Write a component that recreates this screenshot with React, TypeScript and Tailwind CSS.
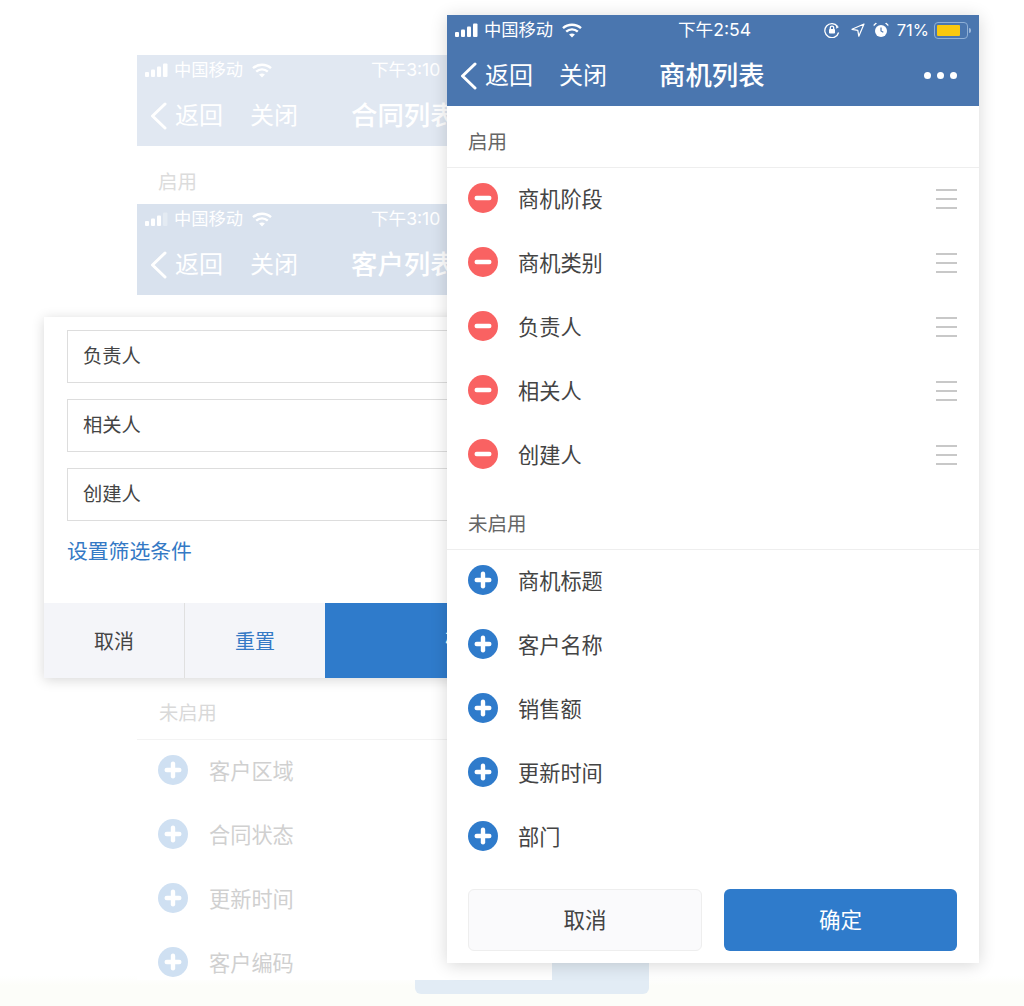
import React from "react";

const FONT = '"Inter","Noto Sans CJK SC",sans-serif';

function Signal({ dim }: { dim?: boolean }) {
  return (
    <svg width="24" height="14" viewBox="0 0 24 14" fill="white">
      <rect x="0" y="9" width="4" height="5" rx="1" />
      <rect x="6" y="6.5" width="4" height="7.5" rx="1" />
      <rect x="12" y="3.5" width="4" height="10.5" rx="1" />
      <rect x="18" y="0.5" width="4.5" height="13.5" rx="1" opacity={dim ? 0.3 : 1} />
    </svg>
  );
}

function Wifi() {
  return (
    <svg width="20" height="15" viewBox="0 0 20 15" fill="none" stroke="white" strokeWidth="2.4">
      <path d="M1 5.2C6 .6 14 .6 19 5.2" />
      <path d="M4.2 8.6c3.3-3 8.3-3 11.6 0" />
      <path d="M10 14.6l-2.9-3.1c1.7-1.4 4.1-1.4 5.8 0z" fill="white" stroke="none" />
    </svg>
  );
}

function Header({
  title,
  time,
  bg,
  main,
  dim,
}: {
  title: string;
  time: string;
  bg: string;
  main?: boolean;
  dim?: boolean;
}) {
  return (
    <div className={`h-[91px] shrink-0 flex flex-col text-white ${bg}`}>
      <div className="h-[30px] flex items-center pl-2 pr-[8px]">
        <Signal dim={dim} />
        <span className="ml-[5px] w-[70px] text-[17.3px] leading-none whitespace-nowrap">中国移动</span>
        <span className="ml-[8px] flex">
          <Wifi />
        </span>
        <span className={`text-[17.6px] leading-none whitespace-nowrap ${main ? "ml-[96px]" : "ml-[99px]"}`}>{time}</span>
        {main && (
          <div className="ml-auto flex items-center">
            <svg width="16" height="16" viewBox="0 0 16 16" fill="none" stroke="white" strokeWidth="1.3">
              <path d="M13.5 4.5A7 7 0 1 0 14.6 10.5" />
              <path d="M12 3.5l3 1.6-2.7 1.6z" fill="white" stroke="none" />
              <rect x="5" y="7" width="6" height="4.6" rx="0.8" fill="white" stroke="none" />
              <path d="M6.3 7V5.8a1.7 1.7 0 0 1 3.4 0V7" />
            </svg>
            <svg className="ml-[11px]" width="14" height="14" viewBox="0 0 14 14" fill="none" stroke="white" strokeWidth="1.2" strokeLinejoin="round">
              <path d="M13 1L1 6.3l5.8 1 1 5.9z" />
            </svg>
            <svg className="ml-[8px]" width="16" height="16" viewBox="0 0 16 16" fill="white">
              <circle cx="8" cy="9" r="6" />
              <path d="M8 5.5V9l2.3 1.3" fill="none" stroke="#4a76af" strokeWidth="1.2" />
              <path d="M0.8 4.2L4 1.3 2.6 0.8 0.5 2.7zM15.2 4.2L12 1.3l1.4-.5 2.1 1.9z" />
            </svg>
            <span className="ml-[8px] text-[16.5px] leading-none">71%</span>
            <div className="ml-[5px] w-[34px] h-[17px] rounded-[4px] border border-[#8fb0d6] p-[2px] flex">
              <div className="w-[23px] h-full rounded-[1px] bg-[#f9c80e]" />
            </div>
            <div className="ml-[1px] w-[2px] h-[5px] rounded-r bg-[#9db9da]" />
          </div>
        )}
      </div>
      <div className="flex-1 flex items-center pl-[13px] pr-[22px]">
        <svg width="17" height="28" viewBox="0 0 17 28" fill="none" stroke="white" strokeWidth="3" strokeLinecap="round" strokeLinejoin="round">
          <path d="M15 2L2.5 14 15 26" />
        </svg>
        <span className="ml-[8px] text-[24px] leading-none whitespace-nowrap">返回</span>
        <span className={`text-[24px] leading-none whitespace-nowrap ${main ? "ml-[26px]" : "ml-[27px]"}`}>关闭</span>
        <span className={`text-[26.4px] leading-none whitespace-nowrap font-medium ${main ? "ml-[52px]" : "ml-[53px]"}`}>{title}</span>
        {main && (
          <div className="ml-auto flex gap-[6px]">
            <div className="w-[7px] h-[7px] rounded-full bg-white" />
            <div className="w-[7px] h-[7px] rounded-full bg-white" />
            <div className="w-[7px] h-[7px] rounded-full bg-white" />
          </div>
        )}
      </div>
    </div>
  );
}

function RoundIcon({ kind, faded }: { kind: "minus" | "plus"; faded?: boolean }) {
  const color = kind === "minus" ? "#f96262" : faded ? "#cfe0f2" : "#2f7bcb";
  return (
    <svg className="shrink-0 mb-[2px]" width="30" height="30" viewBox="0 0 30 30">
      <circle cx="15" cy="15" r="15" fill={color} />
      <rect x="6.5" y="12.8" width="17" height="4.4" rx="2.2" fill="white" />
      {kind === "plus" && <rect x="12.8" y="6.5" width="4.4" height="17" rx="2.2" fill="white" />}
    </svg>
  );
}

function Row({ label, kind, handle }: { label: string; kind: "minus" | "plus"; handle?: boolean }) {
  return (
    <div className="h-16 shrink-0 flex items-center pl-[21px] pr-[22px]">
      <RoundIcon kind={kind} />
      <span className="ml-[20px] pt-[2px] text-[21.2px] leading-none text-[#444]">{label}</span>
      {handle && (
        <div className="ml-auto mb-[1px] w-[21px] flex flex-col gap-[7px]">
          <div className="h-[2px] bg-[#c8c8c8]" />
          <div className="h-[2px] bg-[#c8c8c8]" />
          <div className="h-[2px] bg-[#c8c8c8]" />
        </div>
      )}
    </div>
  );
}

function FadedRow({ label }: { label: string }) {
  return (
    <div className="h-16 shrink-0 flex items-center pl-[21px]">
      <RoundIcon kind="plus" faded />
      <span className="ml-[21px] pt-[2px] text-[21.2px] leading-none text-[#d0d0d0]">{label}</span>
    </div>
  );
}

function Field({ label }: { label: string }) {
  return (
    <div className="h-[53px] border border-[#ddd] flex items-center pl-[15px] text-[19.3px] leading-none text-[#444]">
      {label}
    </div>
  );
}

export default function App() {
  return (
    <div
      className="relative w-[1024px] h-[1006px] overflow-hidden bg-[linear-gradient(to_bottom,#ffffff_97%,#fcfdf9_98%)]"
      style={{ fontFamily: FONT }}
    >
      {/* faded confirm button of the window behind */}
      <div className="absolute left-[415px] top-[930px] w-[234px] h-[64px] rounded-[6px] bg-[#e2ecf5]" />

      {/* back window: contract list */}
      <div className="absolute left-[137px] top-[55px] w-[415px] h-[200px] bg-white">
        <Header title="合同列表" time="下午3:10" bg="bg-[#e1e8f2]" />
        <div className="pl-[21px] pt-[27px] text-[19.5px] leading-none text-[#dcdcdc]">启用</div>
      </div>

      {/* back window: customer list */}
      <div className="absolute left-[137px] top-[204px] w-[415px] h-[776px] bg-white flex flex-col overflow-hidden">
        <Header title="客户列表" time="下午3:10" bg="bg-[#d9e2ee]" dim />
        <div className="mt-[403px] h-[42px] shrink-0 pl-[22px] text-[19.3px] leading-none text-[#d9d9d9] border-b border-[#f3f3f3] flex items-start pt-[6px]">
          未启用
        </div>
        <div className="-mt-px">
          <FadedRow label="客户区域" />
          <FadedRow label="合同状态" />
          <FadedRow label="更新时间" />
          <FadedRow label="客户编码" />
        </div>
      </div>

      {/* filter panel */}
      <div className="absolute left-[44px] top-[317px] w-[561px] h-[361px] bg-white shadow-[0_2px_12px_rgba(0,0,0,0.16)] flex flex-col">
        <div className="px-[23px] pt-[13px] flex flex-col gap-[16px]">
          <Field label="负责人" />
          <Field label="相关人" />
          <Field label="创建人" />
        </div>
        <div className="pl-[23px] mt-[21px] text-[20.8px] leading-none text-[#3479c5]">设置筛选条件</div>
        <div className="mt-auto h-[75px] flex text-[20px]">
          <div className="w-[141px] bg-[#f4f5f9] border-r border-[#e0e0e0] flex items-center justify-center pt-[2px] text-[#444]">取消</div>
          <div className="w-[140px] bg-[#f4f5f9] flex items-center justify-center pt-[2px] text-[#3479c5]">重置</div>
          <div className="flex-1 bg-[#2f7bcb] flex items-center justify-center pt-[2px] text-white">确定</div>
        </div>
      </div>

      {/* main window */}
      <div className="absolute left-[447px] top-[15px] w-[532px] h-[948px] bg-white shadow-[0_2px_16px_rgba(0,0,0,0.16)] flex flex-col">
        <Header title="商机列表" time="下午2:54" bg="bg-[#4a76af]" main />
        <div className="h-[62px] shrink-0 border-b border-[#eee] flex items-end pb-[15px] pl-[21px] text-[19.5px] leading-none text-[#666]">启用</div>
        <div className="-mt-px">
          <Row label="商机阶段" kind="minus" handle />
          <Row label="商机类别" kind="minus" handle />
          <Row label="负责人" kind="minus" handle />
          <Row label="相关人" kind="minus" handle />
          <Row label="创建人" kind="minus" handle />
        </div>
        <div className="h-[63px] shrink-0 border-b border-[#eee] flex items-end pb-[15px] pl-[21px] text-[19.5px] leading-none text-[#666]">未启用</div>
        <div className="-mt-px">
          <Row label="商机标题" kind="plus" />
          <Row label="客户名称" kind="plus" />
          <Row label="销售额" kind="plus" />
          <Row label="更新时间" kind="plus" />
          <Row label="部门" kind="plus" />
        </div>
        <div className="mt-auto mb-[12px] pl-[21px] pr-[22px] flex gap-[22px]">
          <div className="w-[234px] h-[62px] rounded-[6px] border border-[#eee] bg-[#fafafc] flex items-center justify-center text-[21.5px] text-[#444]">取消</div>
          <div className="flex-1 h-[62px] rounded-[6px] bg-[#2f7bcb] flex items-center justify-center text-[21.5px] text-white">确定</div>
        </div>
      </div>
    </div>
  );
}
